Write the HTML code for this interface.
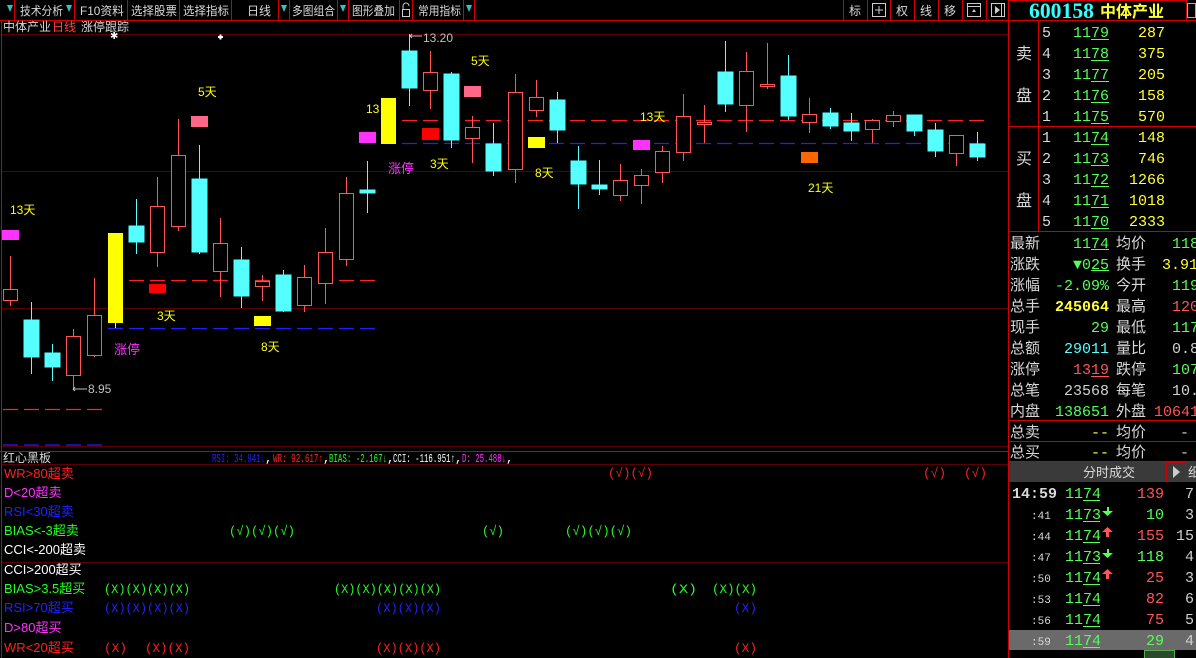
<!DOCTYPE html>
<html><head><meta charset="utf-8"><style>
html,body{margin:0;padding:0;background:#000;width:1196px;height:658px;overflow:hidden}
svg{display:block;font-family:"Liberation Sans","Noto Sans CJK SC","WenQuanYi Zen Hei",sans-serif;font-size:13px}
.m{font-family:"Liberation Mono","Noto Sans CJK SC",monospace}
</style></head><body>
<svg width="1196" height="658" viewBox="0 0 1196 658" xmlns="http://www.w3.org/2000/svg">
<rect width="1196" height="658" fill="#000"/>
<!-- toolbar -->
<g stroke="#d00000" stroke-width="1">
<line x1="0" y1="20.5" x2="1196" y2="20.5"/>
<line x1="14.5" y1="0" x2="14.5" y2="20"/><line x1="74.5" y1="0" x2="74.5" y2="20"/><line x1="127.5" y1="0" x2="127.5" y2="20"/><line x1="179.5" y1="0" x2="179.5" y2="20"/><line x1="231.5" y1="0" x2="231.5" y2="20"/><line x1="278.5" y1="0" x2="278.5" y2="20"/><line x1="289.5" y1="0" x2="289.5" y2="20"/><line x1="337.5" y1="0" x2="337.5" y2="20"/><line x1="348.5" y1="0" x2="348.5" y2="20"/><line x1="399.5" y1="0" x2="399.5" y2="20"/><line x1="412.5" y1="0" x2="412.5" y2="20"/><line x1="463.5" y1="0" x2="463.5" y2="20"/><line x1="474.5" y1="0" x2="474.5" y2="20"/>
<line x1="843.5" y1="0" x2="843.5" y2="20"/><line x1="867.5" y1="0" x2="867.5" y2="20"/><line x1="890.5" y1="0" x2="890.5" y2="20"/><line x1="914.5" y1="0" x2="914.5" y2="20"/><line x1="938.5" y1="0" x2="938.5" y2="20"/><line x1="962.5" y1="0" x2="962.5" y2="20"/><line x1="986.5" y1="0" x2="986.5" y2="20"/>
</g>
<g fill="#2ec4c4"><path d="M7 5h6l-3 7z"/><path d="M66 5h6l-3 7z"/><path d="M281 5h6l-3 7z"/><path d="M340 5h6l-3 7z"/><path d="M466 5h6l-3 7z"/></g>
<g fill="#d8d8d8" font-size="12">
<text x="20" y="15" textLength="43" lengthAdjust="spacingAndGlyphs">技术分析</text><text x="80" y="15" textLength="44" lengthAdjust="spacingAndGlyphs">F10资料</text><text x="131" y="15" textLength="46" lengthAdjust="spacingAndGlyphs">选择股票</text><text x="183" y="15" textLength="46" lengthAdjust="spacingAndGlyphs">选择指标</text><text x="247" y="15">日线</text><text x="292" y="15" textLength="43" lengthAdjust="spacingAndGlyphs">多图组合</text><text x="352" y="15" textLength="43" lengthAdjust="spacingAndGlyphs">图形叠加</text><text x="418" y="15" textLength="43" lengthAdjust="spacingAndGlyphs">常用指标</text>
<text x="849" y="15">标</text><text x="896" y="15">权</text><text x="920" y="15">线</text><text x="944" y="15">移</text>
</g>
<g stroke="#ccc" fill="none"><rect x="872.5" y="3.5" width="13" height="13"/><line x1="879" y1="6" x2="879" y2="14"/><line x1="875" y1="10" x2="883" y2="10"/>
<rect x="967.5" y="3.5" width="13" height="13"/><line x1="968" y1="6.5" x2="980" y2="6.5"/>
<rect x="991.5" y="3.5" width="13" height="13"/><line x1="1001.5" y1="4" x2="1001.5" y2="16"/>
<path d="M403 9v-3a3 3 0 0 1 6 0" /><rect x="402.5" y="9.5" width="7" height="7"/></g>
<path d="M972 12l2-3 2 3z" fill="#ccc"/><path d="M995 6l5 4-5 4z" fill="#ccc"/>

<!-- chart frame -->
<line x1="1.5" y1="21" x2="1.5" y2="658" stroke="#d00000"/>
<line x1="1008.5" y1="0" x2="1008.5" y2="658" stroke="#d00000"/>
<g stroke="#5a0000"><line x1="2" y1="34.5" x2="1008" y2="34.5"/><line x1="2" y1="171.5" x2="1008" y2="171.5"/><line x1="2" y1="308.5" x2="1008" y2="308.5"/><line x1="2" y1="446.5" x2="1008" y2="446.5"/></g>
<text x="3" y="31" fill="#d8d8d8" font-size="12">中体产业</text><text x="52" y="31" fill="#ff4444" font-size="12">日线</text><text x="81" y="31" fill="#d8d8d8" font-size="12">涨停跟踪</text>
<text x="110" y="39" fill="#fff" font-size="10">✱</text><path d="M218 37h5M220.5 34.5v5" stroke="#fff" stroke-width="2"/>

<!-- dashed lines -->
<g stroke-dasharray="15 6" stroke-width="1.3">
<line x1="129" y1="280.5" x2="375" y2="280.5" stroke="#ff2020"/>
<line x1="108" y1="328.5" x2="375" y2="328.5" stroke="#2020ff"/>
<line x1="3" y1="409.5" x2="102" y2="409.5" stroke="#ff2020"/>
<line x1="3" y1="445" x2="102" y2="445" stroke="#2020ff"/>
<line x1="402" y1="120.5" x2="985" y2="120.5" stroke="#ff2020"/>
<line x1="402" y1="143.5" x2="985" y2="143.5" stroke="#2020ff"/>
</g>

<!-- markers -->
<rect x="2" y="230" width="17" height="10" fill="#ff33ff"/>
<rect x="191" y="116" width="17" height="11" fill="#ff6688"/>
<rect x="149" y="284" width="17" height="9" fill="#ff0000"/>
<rect x="254" y="316" width="17" height="10" fill="#ffff00"/>
<rect x="359" y="132" width="17" height="11" fill="#ff33ff"/>
<rect x="422" y="128" width="17" height="12" fill="#ff0000"/>
<rect x="464" y="86" width="17" height="11" fill="#ff6688"/>
<rect x="528" y="137" width="17" height="11" fill="#ffff00"/>
<rect x="633" y="140" width="17" height="10" fill="#ff33ff"/>
<rect x="801" y="152" width="17" height="11" fill="#ff6600"/>

<!-- candles -->
<g stroke-width="1">
<g stroke="#ff5555" fill="#000">
<line x1="10.5" y1="256" x2="10.5" y2="306"/><rect x="3.5" y="289.5" width="14" height="11"/>
<line x1="73.5" y1="329" x2="73.5" y2="389"/><rect x="66.5" y="336.5" width="14" height="39"/>
<line x1="94.5" y1="278" x2="94.5" y2="357"/><rect x="87.5" y="315.5" width="14" height="40"/>
<line x1="157.5" y1="177" x2="157.5" y2="267"/><rect x="150.5" y="206.5" width="14" height="46"/>
<line x1="178.5" y1="119" x2="178.5" y2="231"/><rect x="171.5" y="155.5" width="14" height="71"/>
<line x1="220.5" y1="218" x2="220.5" y2="297"/><rect x="213.5" y="243.5" width="14" height="28"/>
<line x1="262.5" y1="275" x2="262.5" y2="301"/><rect x="255.5" y="281.5" width="14" height="5"/>
<line x1="304.5" y1="265" x2="304.5" y2="312"/><rect x="297.5" y="277.5" width="14" height="28"/>
<line x1="325.5" y1="228" x2="325.5" y2="304"/><rect x="318.5" y="252.5" width="14" height="31"/>
<line x1="346.5" y1="177" x2="346.5" y2="266"/><rect x="339.5" y="193.5" width="14" height="66"/>
<line x1="430.5" y1="51" x2="430.5" y2="109"/><rect x="423.5" y="72.5" width="14" height="18"/>
<line x1="472.5" y1="116" x2="472.5" y2="163"/><rect x="465.5" y="127.5" width="14" height="11"/>
<line x1="515.5" y1="74" x2="515.5" y2="183"/><rect x="508.5" y="92.5" width="14" height="77"/>
<line x1="536.5" y1="80" x2="536.5" y2="117"/><rect x="529.5" y="97.5" width="14" height="13"/>
<line x1="620.5" y1="164" x2="620.5" y2="201"/><rect x="613.5" y="180.5" width="14" height="15"/>
<line x1="641.5" y1="169" x2="641.5" y2="204"/><rect x="634.5" y="175.5" width="14" height="10"/>
<line x1="662.5" y1="146" x2="662.5" y2="183"/><rect x="655.5" y="151.5" width="14" height="21"/>
<line x1="683.5" y1="94" x2="683.5" y2="161"/><rect x="676.5" y="116.5" width="14" height="36"/>
<line x1="704.5" y1="105" x2="704.5" y2="143"/><rect x="697.5" y="122.5" width="14" height="2"/>
<line x1="746.5" y1="52" x2="746.5" y2="132"/><rect x="739.5" y="71.5" width="14" height="34"/>
<line x1="767.5" y1="43" x2="767.5" y2="89"/><rect x="760.5" y="84.5" width="14" height="2"/>
<line x1="809.5" y1="98" x2="809.5" y2="133"/><rect x="802.5" y="114.5" width="14" height="8"/>
<line x1="872.5" y1="119" x2="872.5" y2="143"/><rect x="865.5" y="120.5" width="14" height="9"/>
<line x1="893.5" y1="111" x2="893.5" y2="127"/><rect x="886.5" y="115.5" width="14" height="6"/>
<line x1="956.5" y1="135" x2="956.5" y2="166"/><rect x="949.5" y="135.5" width="14" height="18"/>
</g>
<g stroke="#55ffff" fill="#55ffff">
<line x1="31.5" y1="302" x2="31.5" y2="374"/><rect x="24" y="320" width="15" height="37"/>
<line x1="52.5" y1="344" x2="52.5" y2="381"/><rect x="45" y="353" width="15" height="14"/>
<line x1="136.5" y1="199" x2="136.5" y2="254"/><rect x="129" y="226" width="15" height="16"/>
<line x1="199.5" y1="145" x2="199.5" y2="254"/><rect x="192" y="179" width="15" height="73"/>
<line x1="241.5" y1="247" x2="241.5" y2="308"/><rect x="234" y="260" width="15" height="36"/>
<line x1="283.5" y1="270" x2="283.5" y2="312"/><rect x="276" y="275" width="15" height="36"/>
<line x1="367.5" y1="161" x2="367.5" y2="213"/><rect x="360" y="190" width="15" height="3"/>
<line x1="409.5" y1="34" x2="409.5" y2="106"/><rect x="402" y="51" width="15" height="37"/>
<line x1="451.5" y1="72" x2="451.5" y2="148"/><rect x="444" y="74" width="15" height="66"/>
<line x1="493.5" y1="123" x2="493.5" y2="176"/><rect x="486" y="144" width="15" height="27"/>
<line x1="557.5" y1="92" x2="557.5" y2="143"/><rect x="550" y="100" width="15" height="30"/>
<line x1="578.5" y1="146" x2="578.5" y2="209"/><rect x="571" y="161" width="15" height="23"/>
<line x1="599.5" y1="160" x2="599.5" y2="195"/><rect x="592" y="185" width="15" height="4"/>
<line x1="725.5" y1="41" x2="725.5" y2="112"/><rect x="718" y="72" width="15" height="32"/>
<line x1="788.5" y1="55" x2="788.5" y2="120"/><rect x="781" y="76" width="15" height="40"/>
<line x1="830.5" y1="108" x2="830.5" y2="129"/><rect x="823" y="113" width="15" height="13"/>
<line x1="851.5" y1="113" x2="851.5" y2="141"/><rect x="844" y="123" width="15" height="8"/>
<line x1="914.5" y1="115" x2="914.5" y2="136"/><rect x="907" y="115" width="15" height="16"/>
<line x1="935.5" y1="123" x2="935.5" y2="157"/><rect x="928" y="130" width="15" height="21"/>
<line x1="977.5" y1="132" x2="977.5" y2="161"/><rect x="970" y="144" width="15" height="13"/>
</g>
<line x1="115.5" y1="233" x2="115.5" y2="328" stroke="#ffff00"/><rect x="108" y="233" width="15" height="90" fill="#ffff00"/>
<rect x="381" y="98" width="15" height="46" fill="#ffff00"/>
</g>

<!-- labels -->
<g fill="#ffff00" font-size="12">
<text x="10" y="214">13天</text><text x="198" y="96">5天</text><text x="157" y="320">3天</text><text x="261" y="351">8天</text>
<text x="366" y="113">13</text><text x="430" y="168">3天</text><text x="471" y="65">5天</text><text x="535" y="177">8天</text><text x="640" y="121">13天</text><text x="808" y="192">21天</text>
</g>
<text x="114" y="354" fill="#ff33ff" font-size="13">涨停</text><text x="388" y="173" fill="#ff33ff" font-size="13">涨停</text>
<g fill="#c0c0c0" font-size="12"><text x="423" y="42">13.20</text><text x="88" y="393">8.95</text></g>
<path d="M410 36l2-2M410 36l2 2M410 36h12M73 389h14M73 389l2-2M73 389l2 2" stroke="#c0c0c0"/>

<!-- indicator panel -->
<line x1="0" y1="451.5" x2="1008" y2="451.5" stroke="#d00000"/>
<line x1="2" y1="464.5" x2="1008" y2="464.5" stroke="#5a0000"/>
<line x1="2" y1="562.5" x2="1008" y2="562.5" stroke="#5a0000"/>
<text x="3" y="462" fill="#d8d8d8" font-size="12">红心黑板</text>
<g font-size="12" class="m">
<text x="212" y="462" fill="#2222ff" textLength="53" lengthAdjust="spacingAndGlyphs">RSI: 34.941↓</text><text x="265" y="462" fill="#fff">,</text>
<text x="273" y="462" fill="#ff2020" textLength="50" lengthAdjust="spacingAndGlyphs">WR: 92.617↑</text><text x="323" y="462" fill="#fff">,</text>
<text x="329" y="462" fill="#22ff22" textLength="58" lengthAdjust="spacingAndGlyphs">BIAS: -2.167↓</text><text x="387" y="462" fill="#fff">,</text>
<text x="393" y="462" fill="#ffffff" textLength="62" lengthAdjust="spacingAndGlyphs">CCI: -116.951↑</text><text x="455" y="462" fill="#fff">,</text>
<text x="462" y="462" fill="#ff33ff" textLength="44" lengthAdjust="spacingAndGlyphs">D: 25.488↓</text><text x="506" y="462" fill="#fff">,</text>
</g>
<g font-size="13">
<text x="4" y="478" fill="#ff2020">WR&gt;80超卖</text>
<text x="4" y="497" fill="#ff33ff">D&lt;20超卖</text>
<text x="4" y="516" fill="#2222ff">RSI&lt;30超卖</text>
<text x="4" y="535" fill="#22ff22">BIAS&lt;-3超卖</text>
<text x="4" y="554" fill="#ffffff">CCI&lt;-200超卖</text>
<text x="4" y="574" fill="#ffffff">CCI&gt;200超买</text>
<text x="4" y="593" fill="#22ff22">BIAS&gt;3.5超买</text>
<text x="4" y="612" fill="#2222ff">RSI&gt;70超买</text>
<text x="4" y="632" fill="#ff33ff">D&gt;80超买</text>
<text x="4" y="652" fill="#ff2020">WR&lt;20超买</text>
</g>
<g font-size="13" class="m">
<text x="608" y="477" fill="#ff2020" textLength="45" lengthAdjust="spacingAndGlyphs">(√)(√)</text>
<text x="923" y="477" fill="#ff2020" textLength="23" lengthAdjust="spacingAndGlyphs">(√)</text><text x="964" y="477" fill="#ff2020" textLength="23" lengthAdjust="spacingAndGlyphs">(√)</text>
<text x="229" y="535" fill="#22ff22" textLength="66" lengthAdjust="spacingAndGlyphs">(√)(√)(√)</text>
<text x="482" y="535" fill="#22ff22" textLength="22" lengthAdjust="spacingAndGlyphs">(√)</text>
<text x="565" y="535" fill="#22ff22" textLength="67" lengthAdjust="spacingAndGlyphs">(√)(√)(√)</text>
<text x="104" y="593" fill="#22ff22" textLength="86" lengthAdjust="spacingAndGlyphs">(X)(X)(X)(X)</text>
<text x="334" y="593" fill="#22ff22" textLength="107" lengthAdjust="spacingAndGlyphs">(X)(X)(X)(X)(X)</text>
<text x="670" y="593" fill="#22ff22" textLength="27" lengthAdjust="spacingAndGlyphs">(X)</text><text x="712" y="593" fill="#22ff22" textLength="45" lengthAdjust="spacingAndGlyphs">(X)(X)</text>
<text x="104" y="612" fill="#2222ff" textLength="86" lengthAdjust="spacingAndGlyphs">(X)(X)(X)(X)</text>
<text x="376" y="612" fill="#2222ff" textLength="65" lengthAdjust="spacingAndGlyphs">(X)(X)(X)</text>
<text x="734" y="612" fill="#2222ff" textLength="23" lengthAdjust="spacingAndGlyphs">(X)</text>
<text x="104" y="652" fill="#ff2020" textLength="23" lengthAdjust="spacingAndGlyphs">(X)</text><text x="145" y="652" fill="#ff2020" textLength="45" lengthAdjust="spacingAndGlyphs">(X)(X)</text>
<text x="376" y="652" fill="#ff2020" textLength="65" lengthAdjust="spacingAndGlyphs">(X)(X)(X)</text>
<text x="734" y="652" fill="#ff2020" textLength="23" lengthAdjust="spacingAndGlyphs">(X)</text>
</g>

<!-- right panel -->
<g stroke="#d00000" fill="none">
<rect x="1008.5" y="0.5" width="178" height="20"/>
<line x1="1038.5" y1="21" x2="1038.5" y2="231"/>
<line x1="1008" y1="126.5" x2="1196" y2="126.5"/>
<line x1="1008" y1="231.5" x2="1196" y2="231.5"/>
<line x1="1008" y1="420.5" x2="1196" y2="420.5"/>
<line x1="1008" y1="441.5" x2="1196" y2="441.5"/>
<line x1="1008" y1="461.5" x2="1196" y2="461.5"/>
</g>
<rect x="1187.5" y="3.5" width="8" height="14" fill="none" stroke="#aaa"/>
<text x="1029" y="18" fill="#33ffff" font-size="22" font-weight="bold" font-family="Liberation Serif,serif" textLength="65" lengthAdjust="spacingAndGlyphs">600158</text>
<text x="1100" y="17" fill="#ffff33" font-size="16" font-weight="bold">中体产业</text>
<g fill="#d8d8d8" font-size="16"><text x="1016" y="59">卖</text><text x="1016" y="101">盘</text><text x="1016" y="164">买</text><text x="1016" y="206">盘</text></g>
<g font-size="15" class="m">
<g fill="#d8d8d8"><text x="1042" y="37">5</text><text x="1042" y="58">4</text><text x="1042" y="79">3</text><text x="1042" y="100">2</text><text x="1042" y="121">1</text><text x="1042" y="142">1</text><text x="1042" y="163">2</text><text x="1042" y="184">3</text><text x="1042" y="205">4</text><text x="1042" y="226">5</text></g>
<g fill="#55ff55" text-anchor="end"><text x="1109" y="37">1179</text><text x="1109" y="58">1178</text><text x="1109" y="79">1177</text><text x="1109" y="100">1176</text><text x="1109" y="121">1175</text><text x="1109" y="142">1174</text><text x="1109" y="163">1173</text><text x="1109" y="184">1172</text><text x="1109" y="205">1171</text><text x="1109" y="226">1170</text></g>
<g fill="#ffff33" text-anchor="end"><text x="1165" y="37">287</text><text x="1165" y="58">375</text><text x="1165" y="79">205</text><text x="1165" y="100">158</text><text x="1165" y="121">570</text><text x="1165" y="142">148</text><text x="1165" y="163">746</text><text x="1165" y="184">1266</text><text x="1165" y="205">1018</text><text x="1165" y="226">2333</text></g>
</g>
<g stroke="#55ff55"><line x1="1091" y1="39.5" x2="1109" y2="39.5"/><line x1="1091" y1="60.5" x2="1109" y2="60.5"/><line x1="1091" y1="81.5" x2="1109" y2="81.5"/><line x1="1091" y1="102.5" x2="1109" y2="102.5"/><line x1="1091" y1="123.5" x2="1109" y2="123.5"/><line x1="1091" y1="144.5" x2="1109" y2="144.5"/><line x1="1091" y1="165.5" x2="1109" y2="165.5"/><line x1="1091" y1="186.5" x2="1109" y2="186.5"/><line x1="1091" y1="207.5" x2="1109" y2="207.5"/><line x1="1091" y1="228.5" x2="1109" y2="228.5"/><line x1="1091" y1="249.5" x2="1109" y2="249.5"/><line x1="1091" y1="270.5" x2="1109" y2="270.5"/></g>
<g fill="#d8d8d8" font-size="15">
<text x="1010" y="248">最新</text><text x="1010" y="269">涨跌</text><text x="1010" y="290">涨幅</text><text x="1010" y="311">总手</text><text x="1010" y="332">现手</text><text x="1010" y="353">总额</text><text x="1010" y="374">涨停</text><text x="1010" y="395">总笔</text><text x="1010" y="416">内盘</text><text x="1010" y="437">总卖</text><text x="1010" y="457">总买</text>
<text x="1116" y="248">均价</text><text x="1116" y="269">换手</text><text x="1116" y="290">今开</text><text x="1116" y="311">最高</text><text x="1116" y="332">最低</text><text x="1116" y="353">量比</text><text x="1116" y="374">跌停</text><text x="1116" y="395">每笔</text><text x="1116" y="416">外盘</text><text x="1116" y="437">均价</text><text x="1116" y="457">均价</text>
</g>
<g font-size="15" class="m" text-anchor="end">
<text x="1109" y="248" fill="#55ff55">1174</text>
<text x="1109" y="269" fill="#55ff55">▼025</text>
<text x="1109" y="290" fill="#55ff55">-2.09%</text>
<text x="1109" y="311" fill="#ffff33" font-weight="bold">245064</text>
<text x="1109" y="332" fill="#55ff55">29</text>
<text x="1109" y="353" fill="#55ffff">29011</text>
<text x="1109" y="374" fill="#ff5555">1319</text>
<text x="1109" y="395" fill="#d0d0d0">23568</text>
<text x="1109" y="416" fill="#55ff55">138651</text>
<text x="1109" y="437" fill="#ffff33">--</text>
<text x="1109" y="457" fill="#ffff33">--</text>
</g>
<g font-size="15" class="m">
<text x="1172" y="248" fill="#55ff55">118</text>
<text x="1162" y="269" fill="#ffff33">3.91</text>
<text x="1172" y="290" fill="#55ff55">119</text>
<text x="1172" y="311" fill="#ff5555">120</text>
<text x="1172" y="332" fill="#55ff55">117</text>
<text x="1172" y="353" fill="#d0d0d0">0.8</text>
<text x="1172" y="374" fill="#55ff55">107</text>
<text x="1172" y="395" fill="#d0d0d0">10.</text>
<text x="1154" y="416" fill="#ff5555">10641</text>
<text x="1180" y="437" fill="#d0d0d0">-</text>
<text x="1180" y="457" fill="#d0d0d0">-</text>
</g>
<line x1="1091" y1="376.5" x2="1109" y2="376.5" stroke="#ff5555"/>
<!-- trades -->
<rect x="1009" y="462" width="187" height="20" fill="#3a3a3a"/>
<rect x="1166.5" y="462.5" width="19" height="19" fill="none" stroke="#d00000"/>
<path d="M1173 466l7 6-7 6z" fill="#ccc"/>
<text x="1083" y="477" fill="#d8d8d8" font-size="13">分时成交</text>
<text x="1188" y="477" fill="#d8d8d8" font-size="13">细</text>
<rect x="1009" y="630" width="187" height="20" fill="#6a6a6a"/>
<g font-size="15" class="m">
<text x="1012" y="498" fill="#d8d8d8" font-weight="bold">14:59</text>
<g fill="#d8d8d8" font-size="11"><text x="1031" y="519">:41</text><text x="1031" y="540">:44</text><text x="1031" y="561">:47</text><text x="1031" y="582">:50</text><text x="1031" y="603">:53</text><text x="1031" y="624">:56</text><text x="1031" y="645">:59</text></g>
<g fill="#55ff55"><text x="1065" y="498">1174</text><text x="1065" y="519">1173</text><text x="1065" y="540">1174</text><text x="1065" y="561">1173</text><text x="1065" y="582">1174</text><text x="1065" y="603">1174</text><text x="1065" y="624">1174</text><text x="1065" y="645">1174</text></g>
<g text-anchor="end"><text x="1164" y="498" fill="#ff5555">139</text><text x="1164" y="519" fill="#55ff55">10</text><text x="1164" y="540" fill="#ff5555">155</text><text x="1164" y="561" fill="#55ff55">118</text><text x="1164" y="582" fill="#ff5555">25</text><text x="1164" y="603" fill="#ff5555">82</text><text x="1164" y="624" fill="#ff5555">75</text><text x="1164" y="645" fill="#55ff55">29</text></g>
<g fill="#d0d0d0"><text x="1185" y="498">7</text><text x="1185" y="519">3</text><text x="1176" y="540">15</text><text x="1185" y="561">4</text><text x="1185" y="582">3</text><text x="1185" y="603">6</text><text x="1185" y="624">5</text><text x="1185" y="645">4</text></g>
</g>
<g stroke="#55ff55"><line x1="1083" y1="500.5" x2="1100" y2="500.5"/><line x1="1083" y1="521.5" x2="1100" y2="521.5"/><line x1="1083" y1="542.5" x2="1100" y2="542.5"/><line x1="1083" y1="563.5" x2="1100" y2="563.5"/><line x1="1083" y1="584.5" x2="1100" y2="584.5"/><line x1="1083" y1="605.5" x2="1100" y2="605.5"/><line x1="1083" y1="626.5" x2="1100" y2="626.5"/><line x1="1083" y1="647.5" x2="1100" y2="647.5"/></g>
<g fill="#55ff55"><path d="M1102 511h5v-4h2v4h4l-5.5 5z"/><path d="M1102 553h5v-4h2v4h4l-5.5 5z"/></g>
<g fill="#ff5555"><path d="M1102 532l5.5-5 5.5 5h-4v5h-3v-5z"/><path d="M1102 574l5.5-5 5.5 5h-4v5h-3v-5z"/></g>
<rect x="1144.5" y="650.5" width="30" height="10" fill="#2a4a2a" stroke="#55aa55"/>
</svg>
</body></html>
